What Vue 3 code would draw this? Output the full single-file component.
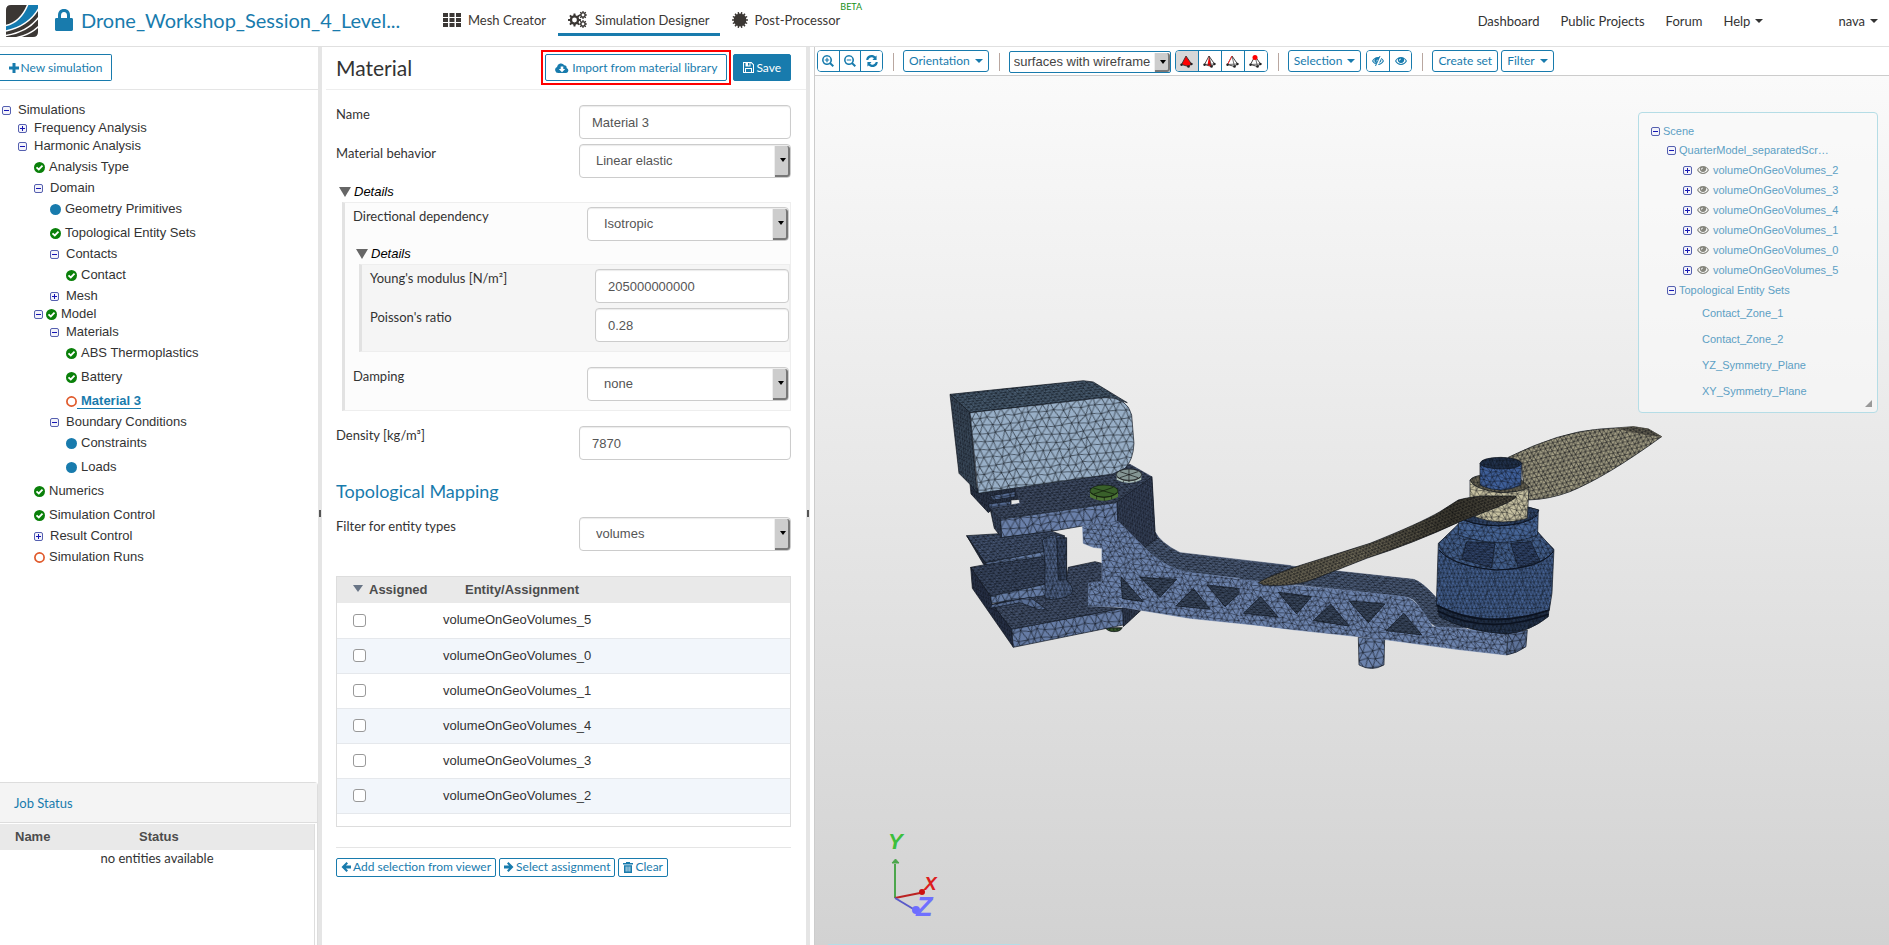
<script setup>
import { h, ref } from 'vue'

function gear(cx, cy, teeth, outer, inner, hole) {
  const step = (Math.PI * 2) / teeth
  let d = ''
  for (let i = 0; i < teeth; i++) {
    const a = i * step
    const pts = [[inner, -0.3], [outer, -0.18], [outer, 0.18], [inner, 0.3]]
    pts.forEach(([r, f], k) => {
      const x = (cx + r * Math.cos(a + f * step)).toFixed(2)
      const y = (cy + r * Math.sin(a + f * step)).toFixed(2)
      d += `${i === 0 && k === 0 ? 'M' : 'L'}${x} ${y}`
    })
  }
  d += 'Z'
  if (hole) {
    d += `M${cx - hole} ${cy}a${hole} ${hole} 0 1 0 ${hole * 2} 0a${hole} ${hole} 0 1 0 ${-hole * 2} 0Z`
  }
  return d
}

const glyphs = {
  lock: [18, 22, 'M3 9V6.500C3 2.600 5 0 9 0s6 2.600 6 6.500V9h1.600c.8 0 1.400.6 1.400 1.400v10.200c0 .8-.6 1.400-1.400 1.400H1.400C.6 22 0 21.400 0 20.600V10.400C0 9.600.6 9 1.400 9ZM6 9h6V6.500C12 4.300 11 3 9 3S6 4.300 6 6.500Z'],
  grid: [18, 14, 'M0 0h5v4H0ZM6.500 0h5v4h-5ZM13 0h5v4h-5ZM0 5h5v4H0ZM6.500 5h5v4h-5ZM13 5h5v4h-5ZM0 10h5v4H0ZM6.500 10h5v4h-5ZM13 10h5v4h-5Z'],
  gears: [19, 17, gear(6.5, 9, 8, 6.5, 4.8, 2.4) + gear(15, 4, 8, 4, 2.8, 1.4) + gear(15, 13, 8, 4, 2.8, 1.4)],
  badge: [16, 16, gear(8, 8, 14, 8, 6.3, 0)],
  plus: [10, 10, 'M3.500 0h3v3.500H10v3H6.500V10h-3V6.500H0v-3h3.500Z'],
  cloud: [14, 10, 'M3.200 10A3.200 3.200 0 0 1 2 3.900 4 4 0 0 1 9.300 2.200 2.300 2.300 0 0 1 11.600 5 2.600 2.600 0 0 1 11.200 10ZM5.700 3.500V6H3.800L7 9.200 10.200 6H8.300V3.500Z'],
  save: [11, 11, 'M0 0h8.500L11 2.500V11H0ZM1 1v9h1V6h7v4h1V3L8 1H7.500v3.500H2.500V1ZM5 1v2.500h1.500V1ZM3 7v3h5V7Z'],
  left: [10, 10, 'M5.500 0 7 1.500 5 3.600H10v2.800H5L7 8.500 5.500 10 .5 5Z'],
  right: [10, 10, 'M4.500 0 3 1.500 5 3.600H0v2.800H5L3 8.500 4.500 10 9.500 5Z'],
  trash: [10, 11, 'M3 1V0h4v1h3v1.500H0V1ZM1 3.300h8V11H1ZM2.700 4.500v5h.8v-5ZM4.600 4.500v5h.8v-5ZM6.500 4.500v5h.8v-5Z'],
  zoomIn: [12, 12, 'M5 0a5 5 0 0 1 4.100 7.800L12 10.600 10.600 12 7.800 9.200A5 5 0 1 1 5 0ZM5 1.600a3.400 3.400 0 1 0 0 6.800 3.400 3.400 0 0 0 0-6.800ZM4.400 2.800h1.200v1.600h1.600v1.200H5.600v1.600H4.400V5.600H2.800V4.400h1.600Z'],
  zoomOut: [12, 12, 'M5 0a5 5 0 0 1 4.100 7.800L12 10.600 10.600 12 7.800 9.200A5 5 0 1 1 5 0ZM5 1.600a3.400 3.400 0 1 0 0 6.800 3.400 3.400 0 0 0 0-6.800ZM2.800 4.400h4.400v1.200H2.800Z'],
  refresh: [12, 12, 'M.2 5A5.300 5.300 0 0 1 9.300 1.600L10.600.4V5H6.500L7.900 3.200A3.500 3.500 0 0 0 2.200 5ZM11.800 7A5.300 5.300 0 0 1 2.700 10.400L1.400 11.600V7H5.500L4.100 8.800A3.500 3.500 0 0 0 9.800 7Z'],
  eye: [12, 8, 'M6 0C8.800 0 10.900 1.800 12 4 10.900 6.200 8.800 8 6 8S1.100 6.200 0 4C1.100 1.800 3.200 0 6 0ZM3 1.700A6.500 6.500 0 0 0 1.200 4 5.600 5.600 0 0 0 6 7a5.600 5.600 0 0 0 4.800-3A6.500 6.500 0 0 0 9 1.700 3.200 3.200 0 1 1 3 1.700ZM5.500 1.500A2 2 0 0 0 4 3.500h1A1.200 1.200 0 0 1 6 2.300Z'],
  eyeOff: [12, 10, 'M8.500 0 4 10H3l.8-1.700C2.200 7.700.8 6.500 0 5 1.100 2.800 3.200 1 6 1h1l.5-1ZM6.600 2 5.900 3.600A1.700 1.700 0 0 0 4.800 6L4.200 7.300A3.200 3.200 0 0 1 3 2.800 6.500 6.500 0 0 0 1.200 5 6 6 0 0 0 4.200 7.500ZM9.300 2A7.500 7.500 0 0 1 12 5C10.900 7.200 8.800 9 6 9L6.500 7.900A5.700 5.700 0 0 0 10.800 5 6.300 6.300 0 0 0 9.200 3.100 3.200 3.200 0 0 1 7 7Z'],
  caret: [8, 4, 'M0 0h8L4 4Z'],
}

const Icon = (props) => {
  const [w, ht, d] = glyphs[props.name]
  return h('svg', { class: 'icon', width: w, height: ht, viewBox: `0 0 ${w} ${ht}`, 'aria-hidden': 'true' }, [
    h('path', { d, fill: 'currentColor', 'fill-rule': 'evenodd' }),
  ])
}
Icon.props = ['name']

const tree = [
  { t: 'Simulations', l: 0, k: 'open' },
  { t: 'Frequency Analysis', l: 1, k: 'closed' },
  { t: 'Harmonic Analysis', l: 1, k: 'open' },
  { t: 'Analysis Type', l: 2, s: 'ok' },
  { t: 'Domain', l: 2, k: 'open' },
  { t: 'Geometry Primitives', l: 3, s: 'dot' },
  { t: 'Topological Entity Sets', l: 3, s: 'ok' },
  { t: 'Contacts', l: 3, k: 'open' },
  { t: 'Contact', l: 4, s: 'ok' },
  { t: 'Mesh', l: 3, k: 'closed' },
  { t: 'Model', l: 2, k: 'open', s: 'ok' },
  { t: 'Materials', l: 3, k: 'open' },
  { t: 'ABS Thermoplastics', l: 4, s: 'ok' },
  { t: 'Battery', l: 4, s: 'ok' },
  { t: 'Material 3', l: 4, s: 'ring', active: true },
  { t: 'Boundary Conditions', l: 3, k: 'open' },
  { t: 'Constraints', l: 4, s: 'dot' },
  { t: 'Loads', l: 4, s: 'dot' },
  { t: 'Numerics', l: 2, s: 'ok' },
  { t: 'Simulation Control', l: 2, s: 'ok' },
  { t: 'Result Control', l: 2, k: 'closed' },
  { t: 'Simulation Runs', l: 2, s: 'ring' },
]

const sceneVolumes = [2, 3, 4, 1, 0, 5]
const sceneSets = ['Contact_Zone_1', 'Contact_Zone_2', 'YZ_Symmetry_Plane', 'XY_Symmetry_Plane']

const name = ref('Material 3')
const modulus = ref('205000000000')
const poisson = ref('0.28')
const density = ref('7870')
const entities = ref([5, 0, 1, 4, 3, 2].map((n) => ({ n, on: false })))

// Tileable triangle mesh with slightly shifted vertices.
function meshPath(n, size, jitter, seed) {
  let s = seed
  const rnd = () => {
    s = (s * 16807) % 2147483647
    return s / 2147483647 - 0.5
  }
  const off = Array.from({ length: n * n }, () => [rnd() * jitter * size, rnd() * jitter * size])
  const at = (i, j) => {
    const o = off[((j + n) % n) * n + ((i + n) % n)]
    return `${(i * size + o[0]).toFixed(1)} ${(j * size + o[1]).toFixed(1)}`
  }
  let d = ''
  for (let j = -1; j <= n; j++) {
    for (let i = -1; i <= n; i++) {
      d += `M${at(i + 1, j)}L${at(i, j)}L${at(i, j + 1)}L${at(i + 1, j)}`
    }
  }
  return d
}

const meshes = [
  { id: 'coarse', n: 8, size: 24, j: 0.45, w: 2.100, t: 'matrix(1 -.12 .5 .95 0 0)', o: 0.8 },
  { id: 'battery', n: 8, size: 25, j: 0.35, w: 2.100, t: 'matrix(1 -.11 .5 .9 0 0)', o: 0.8 },
  { id: 'arm', n: 8, size: 18, j: 0.65, w: 1.900, t: 'matrix(1 .1 .5 .9 0 0)', o: 0.78 },
  { id: 'top', n: 8, size: 12, j: 0.3, w: 1.900, t: 'matrix(1.200 -.14 .7 .6 0 0)', o: 0.7 },
  { id: 'deck', n: 8, size: 14, j: 0.3, w: 1.900, t: 'matrix(1.300 .12 .6 .6 0 0)', o: 0.7 },
  { id: 'side', n: 8, size: 12, j: 0.3, w: 1.900, t: 'matrix(.6 .3 .1 1.100 0 0)', o: 0.7 },
  { id: 'fine', n: 8, size: 13, j: 0.5, w: 1.900, t: 'matrix(.8 0 .4 1 0 0)', o: 0.75 },
  { id: 'blade', n: 8, size: 14, j: 0.25, w: 2.100, t: 'matrix(1 -.25 .5 .8 0 0)', o: 0.8 },
  { id: 'bladeDark', n: 8, size: 11, j: 0.2, w: 2, t: 'matrix(.9 -.35 .7 .6 0 0)', o: 0.8 },
].map((m, i) => ({ ...m, box: m.n * m.size, d: meshPath(m.n, m.size, m.j, 77 + i * 31) }))

const frame = [
  ['M110 527 360 512 405 528 345 577 165 608Z', '#465674', 'top'],
  ['M110 527 165 608 175 627 160 612Z', '#2b364b', 'side'],
  ['M165 608 370 570 370 590 175 627Z', '#667da6', 'coarse'],
  ['M122 622 165 614 345 590 350 672 182 712Z', '#3d4b66', 'top'],
  ['M127 658 180 735 350 690 410 655 415 622 495 605 515 610 515 665 475 672 475 738 580 745 245 810Z', '#46546f', 'top'],
  ['M122 622 182 710 185 730 245 808 250 862 127 685Z', '#2b364e', 'side'],
  ['M182 708 350 672 400 690 350 706 185 730Z', '#667da6', 'coarse'],
  ['M185 734 300 712 350 748 330 750 270 728 180 745Z', '#596e95', 'coarse'],
  ['M337 540Q372 512 408 535L410 660Q440 690 420 705Q380 725 345 715L345 600Z', '#51658b', 'fine'],
  ['M380 535 410 533 410 660 385 660Z', '#3a4a68', 'fine'],
  ['M527 803h50q-6 13-26 12t-24-12Z', '#3b5c2c', 'fine'],
  ['M245 808 580 745 580 795 250 862Z', '#667ca5', 'coarse'],
  ['M578 742 632 752 580 800Z', '#354158', 'side'],
  ['M120 372 140 385 270 370 270 418 243 420 243 434 190 445 175 458 123 402Z', '#303b50', 'side'],
  ['M180 408 255 395 255 410 190 420ZM175 432 242 424 242 438 180 452Z', '#566b92', 'coarse'],
  ['M256 370 548 325 600 313 665 350 560 428 212 478 180 445 235 436 270 430Z', '#424f68', 'top', true],
  ['M180 445 212 478 215 533 193 505Z', '#3b4962', 'side'],
  ['M212 478 560 428 566 485 458 498 375 512 215 533Z', '#6a80aa', 'coarse'],
  ['M560 427 665 350 675 515Q690 548 750 578L1082 617 1082 672 960 658 760 637Q700 620 640 565L563 485Z', '#4b5b77', 'deck', true],
  ['M563 424 666 350 675 515 680 535 640 565 563 487Z', '#3a4760', 'side'],
  ['M458 498 565 485 635 555Q690 615 760 635L960 660 1082 675 1082 806 780 775 580 742 475 738 475 670 516 665 516 565 490 562 460 550Z', '#6c83ad', 'arm', true],
  ['M573 650 640 725 577 716ZM630 652 740 658 690 712ZM790 685 738 738 840 748ZM832 675 942 687 885 740ZM992 708 940 762 1045 774Z', '#3b4960', 'deck'],
]

const battery = [
  ['M60 103 460 62 490 66 592 128 540 112 120 158Z', '#4a5e72', 'top'],
  ['M60 103 120 158 142 400 122 375 87 340Z', '#405163', 'side'],
  ['M120 158 525 112Q592 112 605 165L612 250Q610 300 585 325L548 342 145 400Z', '#98afc7', 'battery'],
]

const motor = [
  ['M0 483 170 500 520 538Q545 543 595 600L640 650 680 685 590 682Q555 660 535 615 520 590 490 590L330 572 150 552 0 538Z', '#4b5b77', 'deck', true],
  ['M355 712 434 718 432 795Q395 816 357 795Z', '#6b82ac', 'coarse'],
  ['M0 540 160 556 330 572 490 590Q520 592 545 630L578 680 650 685 805 700 800 765 650 748 430 718 150 688 0 668Z', '#6c83ad', 'arm', true],
  ['M805 700 862 690 858 740Q830 760 800 765Z', '#5d7299', 'coarse'],
  ['M10 640 62 590 115 652ZM115 577 215 590 170 642ZM272 612 220 662 328 678ZM328 603 435 612 385 668ZM492 640 438 692 545 705Z', '#3b4960', 'deck'],
  ['M590 600 598 650Q680 695 800 702 870 695 925 650L930 600Z', '#24344f', 'fine'],
  ['M655 375 595 430 589 615Q740 690 928 630L936 580 942 448 893 400Z', '#456294', 'fine'],
  ['M655 372 597 430Q600 460 650 485 770 530 880 495 940 470 940 448L893 395Q770 445 655 372Z', '#425e8b', 'arm'],
  ['M680 425 765 430 755 503 665 478ZM812 430 873 425 900 483 835 503Z', '#30446a', 'deck'],
  ['M655 350Q770 290 895 330L893 405Q780 450 655 405Z', '#466597', 'arm'],
  ['M655 350Q770 290 897 330 880 372 775 377 690 375 655 350Z', '#33496f', 'fine'],
]

const prop = [
  ['M805 172Q960 95 1080 87L1180 80 1225 87 1265 110Q1100 230 990 275 930 298 865 300L850 250 845 190Z', '#a49f85', 'blade'],
  ['M1130 86 1180 80 1225 87 1265 110 1220 105Z', '#6b6757', 'bladeDark', true],
  ['M690 240 690 290 705 350Q780 380 862 355L867 260Z', '#c8c2a2', 'arm'],
  ['M690 240Q700 228 725 226L845 240 867 262Q840 278 780 278 700 268 690 240Z', '#6d6856', 'fine'],
  ['M720 190 720 255Q780 285 843 255L845 190Z', '#3f609b', 'arm'],
  ['M720 190Q725 173 783 172 840 175 845 190 840 206 783 207 725 205 720 190Z', '#22334f', 'fine'],
  ['M55 548Q80 530 175 498L390 430Q540 370 600 335L655 300Q690 290 740 288L828 288Q830 300 750 330L660 365Q520 430 380 475L215 540Q150 562 70 555Z', '#7d7762', 'bladeDark'],
]

const groups = [
  { t: 'translate(930 360) scale(.3333)', faces: frame },
  { t: 'translate(930 360) scale(.3333)', faces: battery },
  { t: 'translate(1240 400) scale(.3333)', faces: motor },
  { t: 'translate(1240 400) scale(.3333)', faces: prop },
]

const pickModes = ['volume', 'face', 'edge', 'vertex']
</script>

<template>
  <div class="app">
    <header class="top">
      <a href="#" class="logo" aria-label="Home">
        <svg width="32" height="32" viewBox="0 0 32 32">
          <defs><clipPath id="logoClip"><path d="M5 0H32V27Q32 32 27 32H0V5Q0 0 5 0Z" /></clipPath></defs>
          <g clip-path="url(#logoClip)">
            <rect width="32" height="32" fill="#3b3734" />
            <path d="M0 20.500Q15 17 22-1H33V3Q23 21 0 26Z" fill="#147bb0" />
            <path d="M0 20.500Q15 17 22-1M0 26Q23 21 33 3M0 30.500Q22 27 33 12M9 33Q24 30 33 21" stroke="#fff" stroke-width="1.500" fill="none" />
          </g>
        </svg>
      </a>
      <a href="#" class="project"><Icon name="lock" /><span>Drone_Workshop_Session_4_Level...</span></a>
      <nav class="tabs">
        <a href="#"><Icon name="grid" />Mesh Creator</a>
        <a href="#" class="on"><Icon name="gears" />Simulation Designer</a>
        <a href="#"><Icon name="badge" />Post-Processor<sup>BETA</sup></a>
      </nav>
      <nav class="links">
        <a href="#">Dashboard</a>
        <a href="#">Public Projects</a>
        <a href="#">Forum</a>
        <a href="#">Help <Icon name="caret" /></a>
        <a href="#" class="user">nava <Icon name="caret" /></a>
      </nav>
    </header>

    <main class="work">
      <aside class="side">
        <div class="side-bar"><button class="btn new"><Icon name="plus" />New simulation</button></div>
        <ul class="tree">
          <li v-for="n in tree" :key="n.t" :class="{ leaf: !n.k }" :style="{ paddingLeft: 2 + n.l * 16 + 'px' }">
            <button v-if="n.k" class="tog" :class="[n.k, { tight: n.s }]" :aria-label="'Toggle ' + n.t"></button>
            <svg v-if="n.s" class="status" width="11" height="11" viewBox="0 0 11 11" aria-hidden="true">
              <circle v-if="n.s === 'ring'" cx="5.500" cy="5.500" r="4.600" fill="#fff" stroke="#e0592a" stroke-width="1.700" />
              <circle v-else cx="5.500" cy="5.500" r="5.500" :fill="n.s === 'ok' ? '#0a800a' : '#187bad'" />
              <path v-if="n.s === 'ok'" d="M2.500 5.300 4.800 7.500 8.500 3.700" fill="none" stroke="#fff" stroke-width="1.800" />
            </svg>
            <a href="#" :class="{ active: n.active }">{{ n.t }}</a>
          </li>
        </ul>
        <section class="jobs">
          <h2>Job Status</h2>
          <table>
            <thead><tr><th class="jn">Name</th><th>Status</th></tr></thead>
            <tbody><tr><td colspan="2">no entities available</td></tr></tbody>
          </table>
        </section>
      </aside>
      <div class="split"></div>

      <section class="panel">
        <div class="panel-head">
          <h1>Material</h1>
          <span class="mark"><button class="btn"><Icon name="cloud" />Import from material library</button></span>
          <button class="btn solid"><Icon name="save" />Save</button>
        </div>
        <form class="form" @submit.prevent>
          <div class="row"><label for="f-name">Name</label><input id="f-name" v-model="name" type="text" /></div>
          <div class="row">
            <label for="f-beh">Material behavior</label>
            <span class="sel"><select id="f-beh"><option>Linear elastic</option></select></span>
          </div>
          <details open class="d1">
            <summary>Details</summary>
            <div class="box">
              <div class="row">
                <label for="f-dir">Directional dependency</label>
                <span class="sel"><select id="f-dir"><option>Isotropic</option></select></span>
              </div>
              <details open class="d2">
                <summary>Details</summary>
                <div class="box inner">
                  <div class="row"><label for="f-ym">Young's modulus [N/m²]</label><input id="f-ym" v-model="modulus" type="text" /></div>
                  <div class="row"><label for="f-pr">Poisson's ratio</label><input id="f-pr" v-model="poisson" type="text" /></div>
                </div>
              </details>
              <div class="row">
                <label for="f-da">Damping</label>
                <span class="sel"><select id="f-da"><option>none</option></select></span>
              </div>
            </div>
          </details>
          <div class="row"><label for="f-de">Density [kg/m³]</label><input id="f-de" v-model="density" type="text" /></div>
          <h2>Topological Mapping</h2>
          <div class="row">
            <label for="f-fi">Filter for entity types</label>
            <span class="sel"><select id="f-fi"><option>volumes</option></select></span>
          </div>
          <div class="grid">
            <table>
              <thead><tr><th class="c1"><i class="tri"></i>Assigned</th><th class="c2">Entity/Assignment</th></tr></thead>
              <tbody>
                <tr v-for="e in entities" :key="e.n">
                  <td class="c1"><input :id="'e' + e.n" v-model="e.on" type="checkbox" /></td>
                  <td><label :for="'e' + e.n">volumeOnGeoVolumes_{{ e.n }}</label></td>
                </tr>
              </tbody>
            </table>
          </div>
          <div class="actions">
            <button class="btn"><Icon name="left" />Add selection from viewer</button>
            <button class="btn"><Icon name="right" />Select assignment</button>
            <button class="btn"><Icon name="trash" />Clear</button>
          </div>
        </form>
      </section>
      <div class="split"></div>

      <section class="viewer">
        <div class="tools">
          <div class="group zooms">
            <button aria-label="Zoom in"><Icon name="zoomIn" /></button>
            <button aria-label="Zoom out"><Icon name="zoomOut" /></button>
            <button aria-label="Reset view"><Icon name="refresh" /></button>
          </div>
          <i class="sep"></i>
          <button class="btn">Orientation <Icon name="caret" /></button>
          <i class="sep"></i>
          <span class="sel small"><select aria-label="Render mode"><option>surfaces with wireframe</option></select></span>
          <div class="group picks">
            <button v-for="m in pickModes" :key="m" :class="{ pressed: m === 'volume' }" :aria-label="'Pick ' + m">
              <svg width="13" height="13" viewBox="0 0 13 13" aria-hidden="true">
                <path d="M6 1 1.500 9.500 8.500 11.500 11.500 9Z" :fill="m === 'volume' ? '#f00' : '#fff'" stroke="#333" stroke-width=".9" />
                <path v-if="m === 'face'" d="M6 1 4.500 10.300 8.500 11.500Z" fill="#f00" />
                <path v-if="m !== 'volume'" d="M6 1 8.500 11.500M1.500 9.500 11.500 9" stroke="#333" stroke-width=".7" fill="none" />
                <path v-if="m === 'edge'" d="M6 1 1.500 9.500" stroke="#f33" fill="none" />
                <circle v-if="m === 'vertex'" cx="6" cy="2.500" r="2.500" fill="#f00" />
                <circle cx="1.500" cy="9.800" r="1.200" fill="#222" /><circle cx="8.500" cy="11.500" r="1.300" fill="#222" /><circle cx="11.500" cy="9" r="1.200" fill="#222" />
              </svg>
            </button>
          </div>
          <i class="sep"></i>
          <button class="btn">Selection <Icon name="caret" /></button>
          <div class="group eyes">
            <button aria-label="Hide selection"><Icon name="eyeOff" /></button>
            <button aria-label="Show all"><Icon name="eye" /></button>
          </div>
          <i class="sep"></i>
          <button class="btn">Create set</button>
          <button class="btn">Filter <Icon name="caret" /></button>
        </div>
        <div class="canvas">
          <svg class="scene3d" viewBox="815 76 1074 869" preserveAspectRatio="xMidYMid meet">
            <defs>
              <pattern v-for="m in meshes" :id="'m-' + m.id" :key="m.id" patternUnits="userSpaceOnUse" :width="m.box" :height="m.box" :patternTransform="m.t">
                <path :d="m.d" fill="none" stroke="#05080e" :stroke-width="m.w" :stroke-opacity="m.o" />
              </pattern>
              <linearGradient id="bladeShade" x1="0" x2="1">
                <stop offset="0" stop-color="#000" stop-opacity=".1" /><stop offset=".4" stop-color="#000" stop-opacity=".05" /><stop offset=".75" stop-color="#000" stop-opacity=".45" /><stop offset="1" stop-color="#000" stop-opacity=".3" />
              </linearGradient>
            </defs>
            <g v-for="(g, gi) in groups" :key="gi" :transform="g.t">
              <g v-for="(f, fi) in g.faces" :key="fi">
                <path :d="f[0]" :fill="f[1]" :stroke="f[3] ? f[1] : '#10161f'" stroke-width="2" stroke-linejoin="round" />
                <path :d="f[0]" :fill="`url(#m-${f[2]})`" />
              </g>
              <template v-if="gi === 0">
                <path d="M480 393v18q38 22 84 0v-18Z" fill="#4d7535" />
                <ellipse cx="522" cy="393" rx="42" ry="18" fill="#39602a" stroke="#0d160a" stroke-width="2" />
                <path d="M482 398q40 30 80 0M500 408v10M523 412v10M545 408v10M490 384l62 18M550 382l-58 20" stroke="#0d160a" stroke-width="2" fill="none" />
              </template>
              <template v-if="gi === 1">
                <path d="M560 345v14q36 20 74 0v-14Z" fill="#a9bcb8" />
                <ellipse cx="597" cy="344" rx="38" ry="17" fill="#849694" stroke="#111" stroke-width="2" />
                <path d="M562 352q36 22 70 0M597 327v40M570 335l54 18M624 335l-54 18M580 362v6M615 362v6" stroke="#111" stroke-width="2" fill="none" />
              </template>
              <g v-if="gi === 2" fill="none" stroke="#0b1220" stroke-width="3">
                <path d="M597 450Q640 500 770 510 900 505 940 455" />
                <path d="M590 615Q740 695 928 630M592 632Q740 708 926 643" stroke-width="5" />
                <path d="M660 350Q680 375 775 378 860 375 893 345" />
              </g>
              <path v-if="gi === 3" :d="g.faces[6][0]" fill="url(#bladeShade)" />
            </g>
            <g fill="none" stroke-width="2">
              <path d="M895 898V864" stroke="#4ca64c" /><path d="M892 863h7l-3.500-4Z" fill="#4ca64c" stroke="#4ca64c" stroke-width="1" />
              <path d="M895 898 920 893" stroke="#b22" /><circle cx="922" cy="892" r="2" fill="#c11" stroke="#c11" />
              <path d="M895 898 915 910" stroke="#5a5ac8" /><circle cx="916" cy="910" r="3" fill="#6d6dff" stroke="#6d6dff" />
              <path d="M828 944.500H1020" stroke="#b5dde6" stroke-width="1" />
            </g>
            <g class="axis">
              <text x="888" y="849" fill="#3cbf3c">Y</text>
              <text x="924" y="890" class="x" fill="#dc1e1e">X</text>
              <text x="916" y="916" class="z" fill="#7070ff">Z</text>
            </g>
          </svg>
          <div class="scene">
            <ul>
              <li class="s0"><button class="tog open" aria-label="Toggle Scene"></button><a href="#">Scene</a></li>
              <li class="s1"><button class="tog open" aria-label="Toggle model"></button><a href="#">QuarterModel_separatedScr…</a></li>
              <li v-for="v in sceneVolumes" :key="v" class="s2">
                <button class="tog closed" :aria-label="'Toggle volume ' + v"></button>
                <span class="look"><Icon name="eye" /></span><a href="#">volumeOnGeoVolumes_{{ v }}</a>
              </li>
              <li class="s1"><button class="tog open" aria-label="Toggle sets"></button><a href="#">Topological Entity Sets</a></li>
              <li v-for="s in sceneSets" :key="s" class="s3"><a href="#">{{ s }}</a></li>
            </ul>
            <svg class="grip" width="7" height="7" viewBox="0 0 7 7" aria-hidden="true"><path d="M7 0V7H0Z" fill="#999" /></svg>
          </div>
        </div>
      </section>
    </main>
  </div>
</template>

<style>
html, body { margin: 0; height: 100%; background: #fff; }
#app { height: 100%; }
</style>

<style scoped>
* { box-sizing: border-box; }
.app { display: flex; flex-direction: column; min-height: 100vh; font: 13px/20px Lato, sans-serif; color: #333; }
a { color: inherit; text-decoration: none; }
button, input, select { font: inherit; margin: 0; }
ul { list-style: none; margin: 0; padding: 0; }
h1, h2 { font-weight: 400; margin: 0; }
table { border-collapse: collapse; width: 100%; }
.icon { flex: none; display: block; }

.top { display: flex; align-items: center; height: 47px; border-bottom: 1px solid #e0e0e0; padding: 0 11px 0 6px; }
.logo { display: flex; margin: 0 17px 4px 0; }
.project { display: flex; align-items: center; gap: 8px; color: #187bad; font-size: 20px; width: 388px; padding-bottom: 6px; }
.tabs { display: flex; align-items: center; height: 47px; color: #3b3734; padding-bottom: 4px; }
.tabs a { position: relative; display: flex; align-items: center; gap: 7px; margin-right: 12px; height: 29px; border-bottom: 3px solid transparent; white-space: nowrap; }
.tabs .on { border-color: #187bad; padding: 0 10px; gap: 8px; }
.tabs sup { position: absolute; left: 100%; top: -6px; color: #189018; font-size: 9px; line-height: 12px; }
.links { margin-left: auto; display: flex; gap: 21px; padding-bottom: 4px; white-space: nowrap; }
.links a { display: flex; align-items: center; gap: 5px; }
.user { margin-left: 54px; }

.work { flex: 1; display: grid; grid-template-columns: 318px 4px 484px 4px minmax(0, 1fr); }
.split { background: #e5e5e5 linear-gradient(#555, #555) 50% 52% / 2px 7px no-repeat; }
.side { display: flex; flex-direction: column; }
.side-bar { height: 43px; padding-top: 7px; border-bottom: 1px solid #e5e5e5; }
.btn { display: inline-flex; align-items: center; justify-content: center; border: 1px solid #187bad; border-radius: 2px; background: #fff; color: #187bad; padding: 0 5px; white-space: nowrap; font-size: 12px; line-height: 18px; }
.new { height: 27px; width: 112px; border-left: 0; gap: 2px; border-radius: 0 2px 2px 0; }
.tree { font: 13px/18px "Liberation Sans", Arial, sans-serif; padding-top: 11px; }
.tree li { display: flex; align-items: center; height: 18px; }
.tree .leaf { height: 24px; }
.tog { flex: none; width: 9px; height: 9px; padding: 0; border: 1px solid #5560b0; border-radius: 2px; margin-right: 7px; background: linear-gradient(#1616b4, #1616b4) center / 5px 1px no-repeat, #f3f3fa; }
.tog.closed { background: linear-gradient(#1616b4, #1616b4) center / 5px 1px no-repeat, linear-gradient(#1616b4, #1616b4) center / 1px 5px no-repeat, #f3f3fa; }
.tog.tight { margin-right: 3px; }
.status { flex: none; margin-right: 4px; }
.active { font-weight: 700; color: #187bad; border-bottom: 1px solid #187bad; line-height: 14px; margin-left: -4px; padding-left: 4px; }
.jobs { margin-top: auto; height: 163px; border: 1px solid #ddd; border-left: 0; border-bottom: 0; border-radius: 0 4px 0 0; padding-right: 2px; background: #fff; }
.jobs h2 { color: #187bad; font-size: 13px; line-height: 20px; padding: 10px 14px; height: 40px; margin-right: -2px; background: #f4f4f4; border-bottom: 1px solid #ddd; }
.jobs table { margin-top: 1px; height: 122px; border-right: 1px solid #ddd; }
.jobs th { font: bold 13px/26px "Liberation Sans", Arial, sans-serif; text-align: left; background: #e9e9e9; color: #4c4c4c; padding: 0 0 0 15px; height: 26px; }
.jobs .jn { width: 124px; }
.jobs td { text-align: center; vertical-align: top; line-height: 16px; padding: 0; }

.panel { padding-bottom: 20px; }
.panel-head { display: flex; align-items: center; height: 43px; margin-left: 4px; padding: 2px 15px 3px 10px; border-bottom: 1px solid #eee; }
.panel-head h1 { font-size: 21px; line-height: 24px; margin-right: auto; }
.mark { display: flex; border: 2px solid #f00; padding: 2px; margin-right: 2px; }
.panel-head .btn { height: 27px; padding: 0 9px; gap: 3px; }
.panel-head .solid { background: #187bad; color: #fff; gap: 2px; }
.form { padding: 15px 15px 0 14px; }
.row { display: flex; justify-content: space-between; margin-bottom: 5px; }
.row > label { line-height: 18px; }
.row > input, .row select { height: 34px; border: 1px solid #ccc; border-radius: 4px; background: #fff; color: #555; font: 13px/20px "Liberation Sans", Arial, sans-serif; box-shadow: inset 0 1px 1px #ececec; }
.row > input { width: 212px; padding: 0 12px; }
.sel { position: relative; display: block; width: 212px; }
.sel select { appearance: none; display: block; width: 100%; padding: 0 30px 0 16px; }
.sel::after { content: ""; position: absolute; top: 2px; right: 1px; bottom: 1px; width: 13px; border: solid #777; border-width: 0 2px 2px 0; border-radius: 0 3px 3px 0; background: #cdcdcd; box-shadow: -1px 0 0 #eee; pointer-events: none; }
.sel::before { content: ""; position: absolute; z-index: 1; right: 5px; top: 14px; border: 3px solid transparent; border-top: 4px solid #000; pointer-events: none; }
summary { display: flex; align-items: center; gap: 3px; color: #000; font: italic 13px/18px "Liberation Sans", Arial, sans-serif; }
summary::before { content: ""; border: 6px solid transparent; border-top: 10px solid #666; border-bottom: 0; }
.d1 > summary { padding: 0 0 0 3px; }
.d2 > summary { padding: 0 0 0 3px; }
.box { margin-left: 6px; margin-top: 1px; border: 1px solid #eee; border-left: 3px solid #e2e2e2; background: #fcfcfc; padding: 4px 1px 4px 8px; }
.box .row > input { width: 194px; }
.box .sel { width: 202px; }
.box > .row:last-child { margin-bottom: 5px; }
.d2 { margin: -1px -1px 15px 0; }
.inner { padding-right: 0; background: #f5f5f5; }
.d1 + .row { margin-top: 15px; }
.form h2 { color: #187bad; font-size: 18px; line-height: 24px; margin: 19px 0 14px; }
.form .grid { margin-top: 25px; border: 1px solid #ddd; padding-bottom: 12px; font: 13px/18px "Liberation Sans", Arial, sans-serif; }
.grid th { background: #e9e9e9; color: #4c4c4c; height: 26px; padding: 0; text-align: left; }
.grid .c1 { width: 106px; padding-left: 16px; }
.grid .c2 { padding-left: 22px; }
.grid td { height: 35px; padding: 0; border-bottom: 1px solid #e5e8ec; }
.grid tbody tr:nth-child(even) { background: #f2f6fb; }
.grid input { appearance: none; display: block; width: 13px; height: 13px; border: 1px solid #999; border-radius: 3px; background: #fff; }
.tri { display: inline-block; border: 5px solid transparent; border-top: 7px solid #697586; border-bottom: 0; margin-right: 6px; vertical-align: 2px; }
.actions { display: flex; gap: 3px; margin-top: 20px; border-top: 1px solid #e5e5e5; padding-top: 10px; }
.actions .btn { height: 19px; padding: 0 4px; gap: 2px; }

.viewer { display: flex; flex-direction: column; margin-left: 4px; border-left: 1px solid #ccc; }
.tools { display: flex; align-items: flex-start; height: 29px; padding: 3px 2px; border-bottom: 1px solid #ccc; }
.tools > .btn { height: 22px; border-radius: 3px; gap: 5px; }
.tools > .btn + .btn { margin-left: 3px; }
.group { display: flex; border: 1px solid #187bad; border-radius: 4px; height: 22px; overflow: hidden; }
.group button { flex: 1; display: flex; align-items: center; justify-content: center; padding: 0; border: 0; background: #fff; color: #187bad; }
.group button + button { border-left: 1px solid #187bad; }
.zooms { width: 66px; }
.picks { width: 93px; margin-left: 4px; }
.group .pressed { background: #d8d8d8; }
.eyes { width: 46px; margin-left: 5px; }
.sep { width: 1px; height: 18px; background: #b9a7a0; margin: 3px 9px 0 10px; }
.sel.small { width: 162px; top: 1px; }
.small select { height: 22px; border: 1px solid #187bad; border-radius: 2px; background: #fff; color: #444; padding: 0 0 0 4px; font: 13px/18px "Liberation Sans", Arial, sans-serif; }
.small::before { top: 9px; }
.canvas { position: relative; flex: 1; background: linear-gradient(#fafafa, #d2d2d2); }
.scene3d { position: absolute; inset: 0; width: 100%; height: 100%; display: block; }
.axis { font: italic bold 22px "Liberation Sans", Arial, sans-serif; }
.axis .x { font-size: 19px; }
.axis .z { font-size: 27px; }
.scene { position: absolute; top: 36px; right: 11px; width: 240px; padding: 9px 12px 8px; border: 1px solid #b5dde6; border-radius: 4px; background: rgba(250, 250, 250, .6); color: #5da0c4; font: 11px/18px "Liberation Sans", Arial, sans-serif; }
.scene li { display: flex; align-items: center; height: 20px; }
.scene .tog { margin-right: 3px; }
.scene .s0 { height: 18px; }
.scene .s1 { padding-left: 16px; }
.scene .s2 { padding-left: 32px; }
.scene .s2 .tog { margin-right: 5px; }
.scene .s3 { padding-left: 51px; height: 26px; }
.look { color: #85857c; margin-right: 4px; }
.grip { position: absolute; right: 5px; bottom: 5px; }
</style>
